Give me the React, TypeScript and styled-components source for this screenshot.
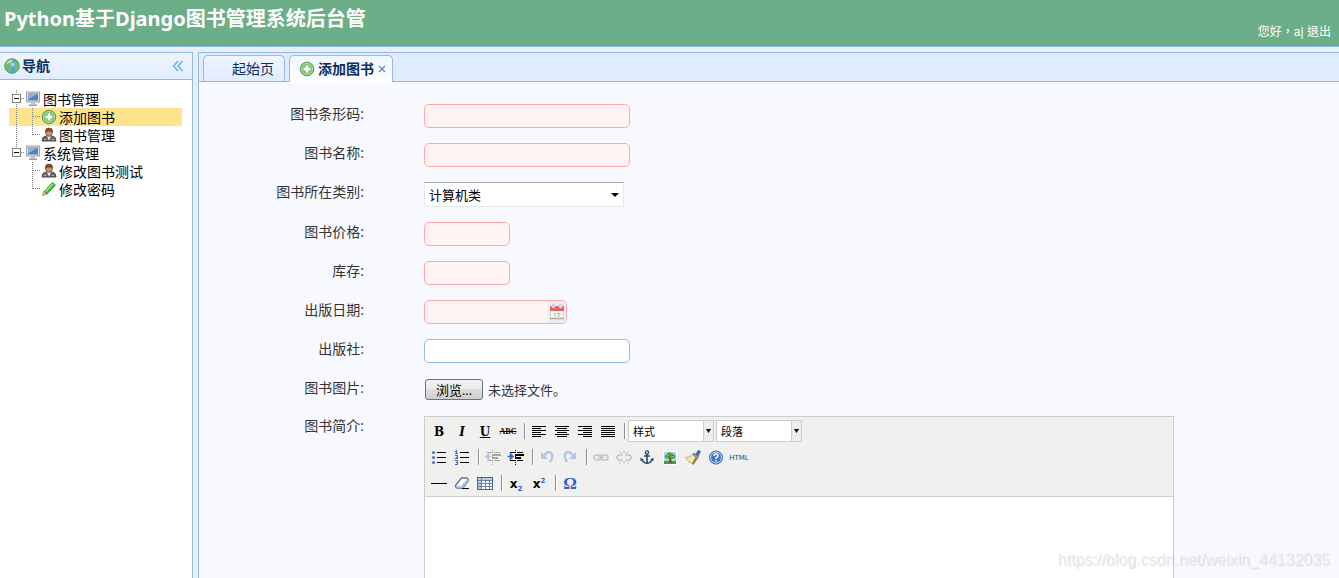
import React, { useRef } from 'react';
import styled, { createGlobalStyle, css } from 'styled-components';

const ui = '"Open Sans", "Noto Sans CJK SC", sans-serif';
const line = '#95b8e7';

const GlobalStyle = createGlobalStyle`
  *, *::before, *::after { box-sizing: border-box; }
  body { margin: 0; font-family: ${ui}; font-size: 14px; color: #333; background: #e6eef8; }
  button, input, select, textarea { font-family: inherit; }
`;

const Page = styled.div`
  display: flex;
  flex-direction: column;
  height: 100vh;
  overflow: hidden;
`;

const Header = styled.header`
  display: flex;
  justify-content: space-between;
  padding: 4px 8px 4px 4px;
  height: 47px;
  flex: none;
  color: #fff;
  background: #6cae87;
  border-bottom: 1px solid ${line};
`;

const Title = styled.h1`
  margin: 0;
  font-family: "Noto Sans", "Noto Sans CJK SC", sans-serif;
  font-size: 20px;
  line-height: 30px;
  font-weight: 700;
`;

const Greeting = styled.div`
  align-self: flex-end;
  font-family: "Liberation Sans", "Noto Sans CJK TC", sans-serif;
  font-size: 12px;
  line-height: 20px;
  a { color: inherit; text-decoration: none; }
`;

const Layout = styled.div`
  flex: 1;
  min-height: 0;
  display: flex;
  gap: 5px;
  padding-top: 5px;
`;

const Sidebar = styled.aside`
  flex: none;
  width: 193px;
  background: #fff;
  border: solid ${line};
  border-width: 1px 1px 0 0;
`;

const SideHeader = styled.div`
  display: flex;
  align-items: center;
  gap: 2px;
  height: 27px;
  padding: 0 8px 0 4px;
  border-bottom: 1px solid ${line};
  background: linear-gradient(#eff5ff, #e0ecff);
`;

const SideTitle = styled.h2`
  flex: 1;
  margin: 0;
  font-size: 14px;
  line-height: 20px;
  color: #0e2d5f;
`;

const PlainButton = styled.button`
  display: flex;
  align-items: center;
  justify-content: center;
  padding: 0;
  border: 0;
  background: none;
  cursor: pointer;
`;

const Tree = styled.ul`
  margin: 0;
  padding: 10px 10px 10px 9px;
  list-style: none;
`;

const Branch = styled.ul`
  margin: 0;
  padding: 0;
  list-style: none;
`;

const Node = styled.div<{ $active?: boolean }>`
  display: flex;
  height: 18px;
  align-items: center;
  background: ${(p) => (p.$active ? '#ffe48d' : 'transparent')};
  color: #000;
  a, span { margin-left: 2px; color: inherit; text-decoration: none; line-height: 20px; padding-top: 2px; }
  svg { flex: none; }
`;

const Main = styled.main`
  flex: 1;
  min-width: 0;
  display: flex;
  flex-direction: column;
  border: solid ${line};
  border-width: 1px 0 0 1px;
  background: #f8f9ff;
`;

const TabBar = styled.div`
  display: flex;
  flex: none;
  gap: 4px;
  height: 29px;
  padding: 2px 4px 0;
  background: #e0ecff;
  border-bottom: 1px solid ${line};
`;

const Tab = styled.div<{ $active?: boolean }>`
  display: flex;
  align-items: center;
  height: 26px;
  border: 1px solid ${line};
  border-bottom: 0;
  border-radius: 5px 5px 0 0;
  color: #0e2d5f;
  background: linear-gradient(#eff5ff, #e0ecff);
  padding: 0 10px 0 28px;
  ${(p) =>
    p.$active &&
    css`
      height: 27px;
      padding: 0 5px 0 9px;
      gap: 3px;
      font-weight: 700;
      background: linear-gradient(#eff5ff, #ffffff);
    `}
`;

const TabLabel = styled.button`
  display: flex;
  align-items: center;
  gap: 3px;
  padding: 0;
  border: 0;
  background: none;
  color: inherit;
  font-size: 14px;
  font-weight: inherit;
  line-height: 20px;
`;

const Content = styled.div`
  flex: 1;
  min-height: 0;
  overflow-y: auto;
  scrollbar-width: none;
  border-top: 1px solid #fff;
`;

const Form = styled.form`
  display: flex;
  flex-direction: column;
  gap: 15px;
  padding: 21px 20px 20px 65px;
`;

const Row = styled.div`
  display: flex;
  align-items: flex-start;
  gap: 60px;
`;

const Label = styled.label`
  flex: none;
  width: 100px;
  text-align: right;
  font-size: 14px;
  line-height: 20px;
`;

const TextInput = styled.input<{ $width: number; $invalid?: boolean }>`
  display: block;
  width: ${(p) => p.$width}px;
  height: 24px;
  padding: 0 4px;
  font-size: 14px;
  border: 1px solid ${(p) => (p.$invalid ? '#ffa8a8' : line)};
  border-radius: 5px;
  background: ${(p) => (p.$invalid ? '#fff3f3' : '#fff')};
`;

const DateBox = styled.div`
  display: flex;
  width: 143px;
  height: 24px;
  border: 1px solid #ffa8a8;
  border-radius: 5px;
  background: #fff3f3;
  overflow: hidden;
  input { flex: 1; min-width: 0; border: 0; background: none; padding: 0 4px; }
`;

const DateButton = styled(PlainButton)`
  width: 18px;
  background: #e0ecff;
  opacity: 0.7;
`;

const SelectWrap = styled.div<{ $small?: boolean }>`
  position: relative;
  width: ${(p) => (p.$small ? 86 : 200)}px;
  select {
    display: block;
    appearance: none;
    width: 100%;
    height: ${(p) => (p.$small ? 22 : 25)}px;
    padding: 0 ${(p) => (p.$small ? 12 : 18)}px 0 4px;
    font-size: ${(p) => (p.$small ? 11 : 13)}px;
    color: #000;
    background: #fff;
    border: 1px solid ${(p) => (p.$small ? '#ccc' : '#e3e9ef')};
    border-top-color: ${(p) => (p.$small ? '#ccc' : '#abadb3')};
    border-radius: 0;
  }
`;

const Arrow = styled.span<{ $small?: boolean }>`
  position: absolute;
  top: 1px;
  bottom: 1px;
  right: ${(p) => (p.$small ? 1 : 4)}px;
  width: 10px;
  display: flex;
  align-items: center;
  justify-content: center;
  pointer-events: none;
  ${(p) => p.$small && 'background: #eee; border-left: 1px solid #ccc;'}
`;

const FileField = styled.div`
  display: flex;
  align-items: center;
  gap: 5px;
  height: 23px;
  padding-left: 1px;
  font-size: 13px;
  line-height: 20px;
  input { display: none; }
`;

const BrowseButton = styled.button`
  width: 58px;
  height: 21px;
  padding: 0;
  font-size: 13px;
  line-height: 18px;
  color: #000;
  border: 1px solid #707070;
  border-radius: 3px;
  background: linear-gradient(#f2f2f2 0%, #ebebeb 50%, #dddddd 50%, #cfcfcf 100%);
`;

const Editor = styled.div`
  width: 750px;
  max-width: 100%;
  border: 1px solid #ccc;
  background: #f0f0ee;
  textarea {
    display: block;
    width: 100%;
    height: 300px;
    border: 0;
    border-top: 1px solid #ccc;
    resize: none;
    background: #fff;
  }
`;

const Toolbar = styled.div`
  padding: 1px 3px 0;
`;

const ToolRow = styled.div`
  display: flex;
  align-items: center;
  height: 26px;
`;

const ToolButton = styled.button<{ $dim?: boolean }>`
  display: flex;
  align-items: center;
  justify-content: center;
  width: 22px;
  height: 22px;
  margin-right: 1px;
  padding: 0;
  border: 0;
  background: none;
  color: #000;
  opacity: ${(p) => (p.$dim ? 0.3 : 1)};
`;

const Divider = styled.span`
  width: 2px;
  height: 16px;
  margin: 0 2px 0 4px;
  border-left: 1px solid #8d8d99;
  border-right: 1px solid #fff;
`;

const StyleSelects = styled.div`
  display: flex;
  gap: 2px;
`;

const Glyph = styled.span<{ $look: 'b' | 'i' | 'u' | 's' | 'html' | 'x' | 'omega' }>`
  font-family: "DejaVu Serif", serif;
  font-weight: 700;
  font-size: 12px;
  line-height: 16px;
  padding-top: 1px;
  ${(p) => p.$look === 'i' && 'font-style: italic;'}
  ${(p) => p.$look === 'u' && 'text-decoration: underline;'}
  ${(p) => p.$look === 's' && 'font-family: "Liberation Serif", serif; font-size: 8px; text-decoration: line-through;'}
  ${(p) => p.$look === 'html' && 'font-family: "DejaVu Sans", sans-serif; font-size: 7px; font-weight: 400; color: #1c4587;'}
  ${(p) => p.$look === 'x' && 'font-family: "DejaVu Sans", sans-serif; font-size: 12px;'}
  ${(p) => p.$look === 'omega' && 'font-family: "Liberation Serif", serif; font-size: 17px; color: #2d62c4;'}
  sub, sup { font-size: 7px; line-height: 0; color: #2d62c4; }
`;

const Watermark = styled.div`
  position: fixed;
  right: 9px;
  bottom: 8px;
  font-family: "Liberation Sans", sans-serif;
  font-size: 16px;
  line-height: 20px;
  color: rgba(235, 235, 238, 0.8);
  text-shadow: 1px 1px 1px rgba(0, 0, 0, 0.12);
  pointer-events: none;
`;

/* ---- tree and panel icons ---- */

const AddIcon = () => (
  <svg width="16" height="16" viewBox="0 0 16 16" aria-hidden="true">
    <circle cx="8" cy="8" r="6.8" fill="#64b25c" stroke="#5d9a55" />
    <circle cx="8" cy="8" r="5.600" fill="#7cc470" stroke="#c6e6bf" strokeWidth=".8" />
    <path d="M6.800 4.500h2.400v2.300h2.300v2.400H9.200v2.300H6.800V9.200H4.500V6.800h2.300z" fill="#fff" />
  </svg>
);

const GlobeIcon = () => (
  <svg width="16" height="16" viewBox="0 0 16 16" aria-hidden="true">
    <circle cx="8" cy="8" r="7.300" fill="#5aa3dc" stroke="#58a05c" />
    <path d="M2 4Q5 0 9 1.500L8 4 5.500 5.500 6 8 8 10 6.500 14Q1 12 1 7zM11 3l3 2 1 4-2.500 4-2-2 .5-3-2-1.500z" fill="#74bd68" />
    <path d="M2.500 6Q4 1.500 9 2L6.500 4.500z" fill="#cbe9bd" />
    <circle cx="8.500" cy="6.500" r="2" fill="#b5dcf5" opacity=".8" />
  </svg>
);

const MonitorIcon = () => (
  <svg width="16" height="16" viewBox="0 0 16 16" aria-hidden="true">
    <rect x="1.500" y="1" width="13" height="10" fill="#dcdcdc" stroke="#a3a3a3" />
    <rect x="3" y="2.500" width="10" height="7" fill="#5580c2" />
    <path d="M3 2.500h10L3 8.500z" fill="#8fb0e0" />
    <path d="M6 11.500h4V13h2v2H4v-2h2z" fill="#c0c0c0" />
    <path d="M4 14.500h8" stroke="#a0a0a0" />
  </svg>
);

const UserIcon = () => (
  <svg width="16" height="16" viewBox="0 0 16 16" aria-hidden="true">
    <path d="M1 14Q1 9.500 5 9h6q4 .5 4 5z" fill="#6a6a6a" stroke="#484848" />
    <path d="M6 9h4l-2 4.500z" fill="#eee" />
    <ellipse cx="8" cy="5.500" rx="3.200" ry="3.800" fill="#cf9469" stroke="#6b3f22" strokeWidth=".8" />
    <path d="M4 6Q3.500.8 8 .8T12 6Q11 4 8 4.500 5 4 4 6z" fill="#7a4a28" />
    <path d="M3 12.500h2m6 0h2" stroke="#b5b5b5" />
  </svg>
);

const PencilIcon = () => (
  <svg width="16" height="16" viewBox="0 0 16 16" aria-hidden="true">
    <path d="M3 10.500 11.500 1.500l3 2.500L6 13z" fill="#3ebb2c" stroke="#1f8a18" strokeWidth=".8" />
    <path d="M4.500 10.500 12 2.800" stroke="#a9ec8d" strokeWidth="1.300" />
    <path d="M3 10.500 1.500 14.500 6 13z" fill="#e8d6a8" stroke="#555" strokeWidth=".6" />
  </svg>
);

const dots = { stroke: '#808080', strokeDasharray: '1 1', shapeRendering: 'crispEdges' as const, fill: 'none' };

const HitCell = ({ first }: { first?: boolean }) => (
  <svg width="16" height="18" viewBox="0 0 16 18" aria-hidden="true">
    <path d={first ? 'M7.500 0V18M8 8.500H16' : 'M7.500 0V8M8 8.500H16'} {...dots} />
    <rect x="3.500" y="4.500" width="8" height="8" fill="#fff" stroke="#808080" shapeRendering="crispEdges" />
    <path d="M5 8.500h5" stroke="#000" shapeRendering="crispEdges" />
  </svg>
);

const LineCell = ({ show }: { show?: boolean }) => (
  <svg width="16" height="18" viewBox="0 0 16 18" aria-hidden="true">
    {show && <path d="M7.500 0V18" {...dots} />}
  </svg>
);

const JoinCell = ({ last }: { last?: boolean }) => (
  <svg width="16" height="18" viewBox="0 0 16 18" aria-hidden="true">
    <path d={last ? 'M7.500 0V9M8 8.500H16' : 'M7.500 0V18M8 8.500H16'} {...dots} />
  </svg>
);

const Triangle = ({ w }: { w: number }) => (
  <svg width={w} height="4" viewBox="0 0 8 4" preserveAspectRatio="none" aria-hidden="true">
    <path d="M0 0h8L4 4z" fill="#000" />
  </svg>
);

const CalendarIcon = () => (
  <svg width="16" height="18" viewBox="0 0 16 18" aria-hidden="true">
    <rect x="1.500" y="3.500" width="13" height="12" fill="#f7f5ef" stroke="#d3cdc2" />
    <rect x="1" y="3" width="14" height="5" fill="#d8272b" />
    <path d="M1 15.500h14" stroke="#8d877c" strokeWidth="1.500" />
    <circle cx="4.500" cy="3.500" r="1.600" fill="#eee" stroke="#9b9b9b" />
    <circle cx="11.500" cy="3.500" r="1.600" fill="#eee" stroke="#9b9b9b" />
    <path d="M5 10.500l1-.5v4M8 10.500h2.500L9 14" fill="none" stroke="#9a9a9a" />
    <circle cx="12.500" cy="13" r="1.800" fill="#fff" stroke="#c9c4bb" strokeWidth=".7" />
  </svg>
);

/* ---- editor toolbar icons ---- */

const Svg = ({ children }: { children: React.ReactNode }) => (
  <svg width="20" height="20" viewBox="0 0 20 20" fill="none" aria-hidden="true">
    {children}
  </svg>
);

const alignPaths: Record<string, string> = {
  left: 'M3 5.500h14M3 7.500h9M3 9.500h14M3 11.500h9M3 13.500h14M3 15.500h9',
  center: 'M3 5.500h14M5 7.500h10M3 9.500h14M5 11.500h10M3 13.500h14M5 15.500h10',
  right: 'M3 5.500h14M8 7.500h9M3 9.500h14M8 11.500h9M3 13.500h14M8 15.500h9',
  full: 'M3 5.500h14M3 7.500h14M3 9.500h14M3 11.500h14M3 13.500h14M3 15.500h14',
};

const AlignIcon = ({ kind }: { kind: string }) => (
  <Svg>
    <path d={alignPaths[kind]} stroke="#000" shapeRendering="crispEdges" />
  </Svg>
);

const BulletIcon = () => (
  <Svg>
    <path d="M8 5.500h9M8 10.500h9M8 15.500h9" stroke="#000" shapeRendering="crispEdges" />
    <g fill="#4a78c8">
      <circle cx="4.500" cy="5.500" r="1.600" />
      <circle cx="4.500" cy="10.500" r="1.600" />
      <circle cx="4.500" cy="15.500" r="1.600" />
    </g>
  </Svg>
);

const NumberIcon = () => (
  <Svg>
    <path d="M8 5.500h9M8 10.500h9M8 15.500h9" stroke="#000" shapeRendering="crispEdges" />
    <path
      d="M3 4.500h1.500M4.500 3v4M3 6.500h3M3 8.500h2.500v1.500L3.500 11.500H6M3 13.500h2.500v4H3M3.500 15.500h2"
      stroke="#3a6cc8"
      shapeRendering="crispEdges"
    />
  </Svg>
);

const IndentIcon = ({ out }: { out?: boolean }) => (
  <Svg>
    <path
      d="M4 5.500h5M11 5.500h6M9 7.500h9M9 8.500h9M9 10.500h6M9 11.500h6M4 13.500h5M11 13.500h6"
      stroke="#000"
      shapeRendering="crispEdges"
    />
    <path d="M9.500 3v15" stroke="#000" strokeDasharray="1 1" shapeRendering="crispEdges" />
    <path d={out ? 'M8 9.500H4M5.500 7L3 9.500 5.500 12z' : 'M1.500 9.500h4M4.500 7L7 9.500 4.500 12z'} stroke="#2d6ad0" strokeWidth="1.500" fill="#2d6ad0" />
  </Svg>
);

const UndoIcon = ({ flip }: { flip?: boolean }) => (
  <Svg>
    <g transform={flip ? 'translate(20 0) scale(-1 1)' : undefined}>
      <path d="M6.500 9Q10 4.500 13.500 5.500 17.500 8 13 15" stroke="#2f69cf" strokeWidth="2.400" />
      <path d="M4 5v7h7z" fill="#2f69cf" />
    </g>
  </Svg>
);

const LinkIcon = ({ broken }: { broken?: boolean }) => (
  <Svg>
    <rect x="3" y="8" width="7" height="5" rx="2.500" stroke="#50658c" strokeWidth="1.700" />
    <rect x="10" y="8" width="7" height="5" rx="2.500" stroke="#50658c" strokeWidth="1.700" />
    {broken ? (
      <>
        <path d="M8.500 6h3v8h-3z" fill="#f0f0ee" />
        <path d="M10 3v4M5 4l3 3M15 4l-3 3M10 14v4M5 17l3-3M15 17l-3-3" stroke="#50658c" />
      </>
    ) : (
      <path d="M7 10.500h6" stroke="#50658c" strokeWidth="1.700" />
    )}
  </Svg>
);

const AnchorIcon = () => (
  <Svg>
    <circle cx="10" cy="5.500" r="1.600" stroke="#2c4770" strokeWidth="1.300" />
    <path d="M10 7V16M7 9h6M5 12Q5.500 16 10 16.300 14.500 16 15 12" stroke="#2c4770" strokeWidth="1.600" />
    <path d="M3.500 14v-3.500L7 13zM16.500 14v-3.500L13 13z" fill="#2c4770" />
  </Svg>
);

const ImageIcon = () => (
  <Svg>
    <rect x="3" y="4" width="14" height="14" fill="#fff" />
    <rect x="4" y="5" width="12" height="9" fill="#a8d4f5" />
    <rect x="4" y="14" width="12" height="3" fill="#4a9f2c" />
    <path d="M9.500 11h1.500v4.500H9.500zM8 10.500l2 2 2.500-2" fill="#744617" stroke="#744617" strokeWidth=".6" />
    <path d="M5 10q-.5-2 2-2.300Q7 5.500 10 5.500t3.500 2.300q2.500.4 2 2.200t-3 1.500l-2-1-2.500 1q-2.500 0-3-1.500z" fill="#3f9a22" />
    <path d="M7 8.500h2M10 7h2M11 9.500h3M6 10h2" stroke="#8bd24c" />
  </Svg>
);

const BrushIcon = () => (
  <Svg>
    <path d="M12 8.500l3-5q2-.5 2.500 1.500L14.500 10z" fill="#4b6ca8" stroke="#35548a" strokeWidth=".6" />
    <path d="M9.500 7l4.500 5 1.500-2L12 6.500z" fill="#7f9acb" stroke="#45608f" strokeWidth=".7" />
    <path d="M9.500 7.500l4.500 4.500-3.500 5.500Q5.500 16 2.500 10.500q4 0 7-3z" fill="#f4e6ae" stroke="#b09a5a" strokeWidth=".7" />
    <path d="M10.500 17.500L14 12l-1.500-1.500L9 16.500z" fill="#8e743a" />
  </Svg>
);

const HelpIcon = () => (
  <Svg>
    <circle cx="10" cy="10.500" r="6.500" fill="#3b78cf" stroke="#2b5dad" />
    <circle cx="10" cy="10.500" r="5.500" stroke="#e6effb" strokeWidth=".9" />
    <path d="M8 9Q8 7 10 7t2 1.800Q12 10 10 11v1M10 13v1.500" stroke="#fff" strokeWidth="1.500" />
  </Svg>
);

const RuleIcon = () => (
  <Svg>
    <path d="M2 10.500h16" stroke="#000" shapeRendering="crispEdges" />
  </Svg>
);

const EraserIcon = () => (
  <Svg>
    <path d="M3.500 12.500L9.500 5h5.500q1.500.5 1 3L11 15H5q-1.500-.5-1.500-2.500z" fill="#fff" stroke="#5c7199" strokeWidth="1.300" />
    <path d="M4 13h5l6.500-7.500L16 8l-5 7H5z" fill="#b3c2dc" />
    <path d="M10 15.500h7" stroke="#000" shapeRendering="crispEdges" />
  </Svg>
);

const TableIcon = () => (
  <Svg>
    <rect x="2.500" y="4.500" width="15" height="12" fill="#fff" stroke="#47658f" shapeRendering="crispEdges" />
    <path d="M3 5h14v2H3zM3 7h3v9H3z" fill="#b9cbe6" />
    <path d="M3 7.500h14M3 10.500h14M3 13.500h14M6.500 5v11M10.500 7v9M14.500 7v9" stroke="#6382b3" shapeRendering="crispEdges" />
  </Svg>
);

function Field({ label, id, children }: { label: string; id: string; children: React.ReactNode }) {
  return (
    <Row>
      <Label htmlFor={id}>{label}:</Label>
      {children}
    </Row>
  );
}

function FormatSelect({ label }: { label: string }) {
  return (
    <SelectWrap $small>
      <select aria-label={label}>
        <option>{label}</option>
      </select>
      <Arrow $small>
        <Triangle w={5} />
      </Arrow>
    </SelectWrap>
  );
}

function Tool({ name, dim, children }: { name: string; dim?: boolean; children: React.ReactNode }) {
  return (
    <ToolButton type="button" aria-label={name} $dim={dim}>
      {children}
    </ToolButton>
  );
}

function RichEditor() {
  return (
    <Editor>
      <Toolbar>
        <ToolRow>
          <Tool name="粗体"><Glyph $look="b">B</Glyph></Tool>
          <Tool name="斜体"><Glyph $look="i">I</Glyph></Tool>
          <Tool name="下划线"><Glyph $look="u">U</Glyph></Tool>
          <Tool name="删除线"><Glyph $look="s">ABC</Glyph></Tool>
          <Divider />
          <Tool name="左对齐"><AlignIcon kind="left" /></Tool>
          <Tool name="居中"><AlignIcon kind="center" /></Tool>
          <Tool name="右对齐"><AlignIcon kind="right" /></Tool>
          <Tool name="两端对齐"><AlignIcon kind="full" /></Tool>
          <Divider />
          <StyleSelects>
            <FormatSelect label="样式" />
            <FormatSelect label="段落" />
          </StyleSelects>
        </ToolRow>
        <ToolRow>
          <Tool name="项目符号"><BulletIcon /></Tool>
          <Tool name="编号"><NumberIcon /></Tool>
          <Divider />
          <Tool name="减少缩进" dim><IndentIcon out /></Tool>
          <Tool name="增加缩进"><IndentIcon /></Tool>
          <Divider />
          <Tool name="撤销" dim><UndoIcon /></Tool>
          <Tool name="重做" dim><UndoIcon flip /></Tool>
          <Divider />
          <Tool name="链接" dim><LinkIcon /></Tool>
          <Tool name="取消链接" dim><LinkIcon broken /></Tool>
          <Tool name="锚点"><AnchorIcon /></Tool>
          <Tool name="图片"><ImageIcon /></Tool>
          <Tool name="清理代码"><BrushIcon /></Tool>
          <Tool name="帮助"><HelpIcon /></Tool>
          <Tool name="源代码"><Glyph $look="html">HTML</Glyph></Tool>
        </ToolRow>
        <ToolRow>
          <Tool name="水平线"><RuleIcon /></Tool>
          <Tool name="清除格式"><EraserIcon /></Tool>
          <Tool name="表格"><TableIcon /></Tool>
          <Divider />
          <Tool name="下标"><Glyph $look="x">x<sub>2</sub></Glyph></Tool>
          <Tool name="上标"><Glyph $look="x">x<sup>2</sup></Glyph></Tool>
          <Divider />
          <Tool name="特殊符号"><Glyph $look="omega">Ω</Glyph></Tool>
        </ToolRow>
      </Toolbar>
      <textarea id="intro" />
    </Editor>
  );
}

export default function App() {
  const fileRef = useRef<HTMLInputElement>(null);
  return (
    <Page>
      <GlobalStyle />
      <Header>
        <Title>Python基于Django图书管理系统后台管</Title>
        <Greeting>
          您好，a| <a href="#logout">退出</a>
        </Greeting>
      </Header>
      <Layout>
        <Sidebar>
          <SideHeader>
            <GlobeIcon />
            <SideTitle>导航</SideTitle>
            <PlainButton type="button" aria-label="折叠">
              <svg width="12" height="12" viewBox="0 0 12 12" fill="none" aria-hidden="true">
                <path d="M6 1L1.500 6 6 11M10.500 1L6 6l4.500 5" stroke="#62a9e8" strokeWidth="1.300" />
              </svg>
            </PlainButton>
          </SideHeader>
          <Tree>
            <li>
              <Node><HitCell first /><MonitorIcon /><span>图书管理</span></Node>
              <Branch>
                <li><Node $active><LineCell show /><JoinCell /><AddIcon /><a href="#add">添加图书</a></Node></li>
                <li><Node><LineCell show /><JoinCell last /><UserIcon /><a href="#books">图书管理</a></Node></li>
              </Branch>
            </li>
            <li>
              <Node><HitCell /><MonitorIcon /><span>系统管理</span></Node>
              <Branch>
                <li><Node><LineCell /><JoinCell /><UserIcon /><a href="#edit">修改图书测试</a></Node></li>
                <li><Node><LineCell /><JoinCell last /><PencilIcon /><a href="#password">修改密码</a></Node></li>
              </Branch>
            </li>
          </Tree>
        </Sidebar>
        <Main>
          <TabBar>
            <Tab>
              <TabLabel type="button">起始页</TabLabel>
            </Tab>
            <Tab $active>
              <TabLabel type="button"><AddIcon />添加图书</TabLabel>
              <PlainButton type="button" aria-label="关闭">
                <svg width="10" height="10" viewBox="0 0 10 10" aria-hidden="true">
                  <path d="M2 2l6 6M8 2L2 8" stroke="#5d88bd" strokeWidth="1.300" />
                </svg>
              </PlainButton>
            </Tab>
          </TabBar>
          <Content>
            <Form>
              <Field label="图书条形码" id="barcode"><TextInput id="barcode" $width={206} $invalid /></Field>
              <Field label="图书名称" id="name"><TextInput id="name" $width={206} $invalid /></Field>
              <Field label="图书所在类别" id="kind">
                <SelectWrap>
                  <select id="kind"><option>计算机类</option></select>
                  <Arrow><Triangle w={8} /></Arrow>
                </SelectWrap>
              </Field>
              <Field label="图书价格" id="price"><TextInput id="price" $width={86} $invalid /></Field>
              <Field label="库存" id="stock"><TextInput id="stock" $width={86} $invalid /></Field>
              <Field label="出版日期" id="date">
                <DateBox>
                  <input id="date" />
                  <DateButton type="button" aria-label="选择日期"><CalendarIcon /></DateButton>
                </DateBox>
              </Field>
              <Field label="出版社" id="publisher"><TextInput id="publisher" $width={206} /></Field>
              <Field label="图书图片" id="photo">
                <FileField>
                  <input id="photo" type="file" ref={fileRef} />
                  <BrowseButton type="button" onClick={() => fileRef.current?.click()}>浏览...</BrowseButton>
                  <span>未选择文件。</span>
                </FileField>
              </Field>
              <Field label="图书简介" id="intro"><RichEditor /></Field>
            </Form>
          </Content>
        </Main>
      </Layout>
      <Watermark>https://blog.csdn.net/weixin_44132035</Watermark>
    </Page>
  );
}
